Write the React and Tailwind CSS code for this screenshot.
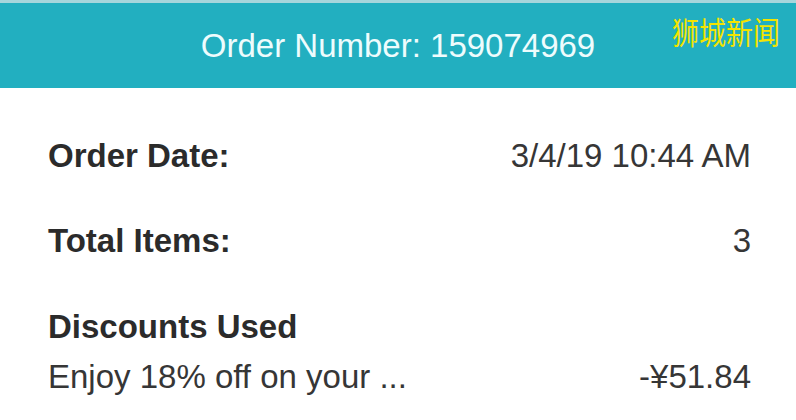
export default function App() {
  return (
    <div className="relative w-[796px] h-[420px] overflow-hidden bg-white font-[family-name:Liberation_Sans,Arial,sans-serif]">
      <div className="h-[88px] border-t-[3px] border-[#a6d6dc] bg-[#22afc0] flex items-center justify-center">
        <span className="text-[33px] leading-[38px] text-[#eefcfd]">Order Number: 159074969</span>
      </div>
      <div className="absolute top-[16px] right-[16px] text-[27px] leading-none text-[#f4e400] origin-top scale-y-[1.12] font-[family-name:Noto_Sans_CJK_SC,sans-serif]">
        狮城新闻
      </div>

      <div className="pl-12 pr-[45px] pt-[49px] text-[33px] leading-[38px]">
        <div className="flex justify-between">
          <span className="font-bold text-[#2b2b2b]">Order Date:</span>
          <span className="text-[#363636]">3/4/19 10:44 AM</span>
        </div>
        <div className="flex justify-between mt-[47px]">
          <span className="font-bold text-[#2b2b2b]">Total Items:</span>
          <span className="text-[#363636]">3</span>
        </div>
        <div className="mt-[48px] font-bold text-[#2b2b2b]">Discounts Used</div>
        <div className="flex justify-between mt-[12px]">
          <span className="text-[#363636]">Enjoy 18% off on your ...</span>
          <span className="text-[#363636]">-¥51.84</span>
        </div>
      </div>
    </div>
  );
}
